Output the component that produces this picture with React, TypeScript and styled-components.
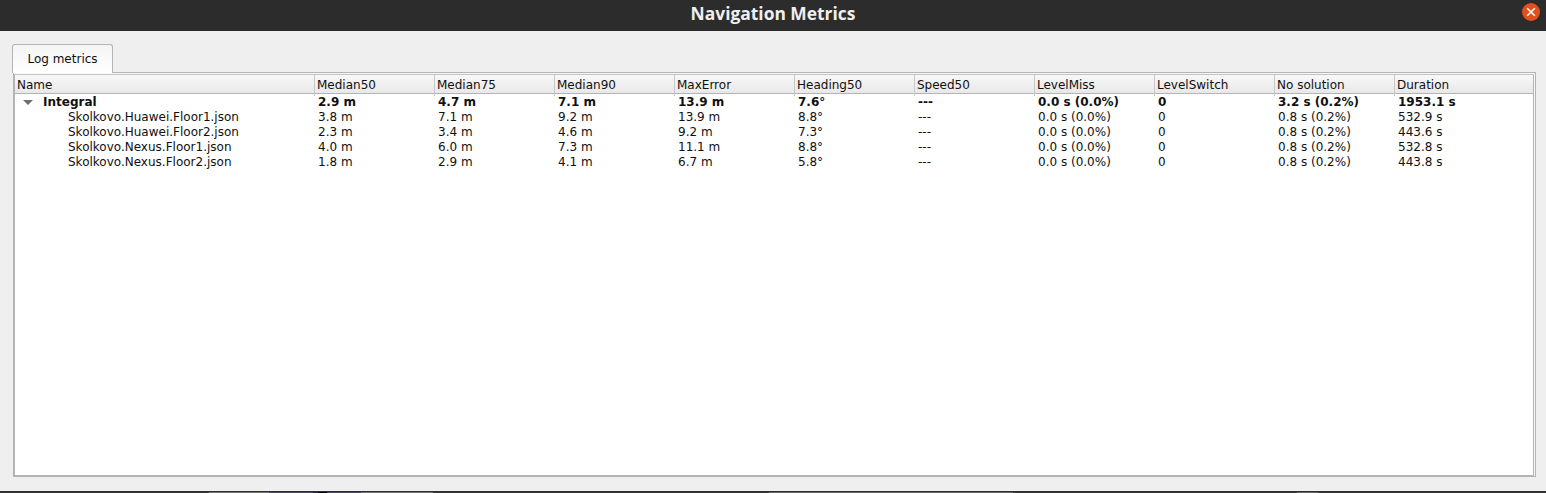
import React from 'react';
import styled, { createGlobalStyle } from 'styled-components';

const columns = [
  'Median50',
  'Median75',
  'Median90',
  'MaxError',
  'Heading50',
  'Speed50',
  'LevelMiss',
  'LevelSwitch',
  'No solution',
  'Duration',
];

const integral = ['2.9 m', '4.7 m', '7.1 m', '13.9 m', '7.6°', '---', '0.0 s (0.0%)', '0', '3.2 s (0.2%)', '1953.1 s'];

const logs = [
  { name: 'Skolkovo.Huawei.Floor1.json', values: ['3.8 m', '7.1 m', '9.2 m', '13.9 m', '8.8°', '---', '0.0 s (0.0%)', '0', '0.8 s (0.2%)', '532.9 s'] },
  { name: 'Skolkovo.Huawei.Floor2.json', values: ['2.3 m', '3.4 m', '4.6 m', '9.2 m', '7.3°', '---', '0.0 s (0.0%)', '0', '0.8 s (0.2%)', '443.6 s'] },
  { name: 'Skolkovo.Nexus.Floor1.json', values: ['4.0 m', '6.0 m', '7.3 m', '11.1 m', '8.8°', '---', '0.0 s (0.0%)', '0', '0.8 s (0.2%)', '532.8 s'] },
  { name: 'Skolkovo.Nexus.Floor2.json', values: ['1.8 m', '2.9 m', '4.1 m', '6.7 m', '5.8°', '---', '0.0 s (0.0%)', '0', '0.8 s (0.2%)', '443.8 s'] },
];

// what shows of the desktop under the window, along the last pixel row
const desktopStrip = [
  { width: 209, color: '#3a3a3a' },
  { width: 60, color: '#777777' },
  { width: 44, color: '#4a4468' },
  { width: 5, color: '#2a2070' },
  { width: 9, color: '#000000' },
  { width: 34, color: '#4a4468' },
  { width: 72, color: '#777777' },
  { width: 336, color: '#3a3a3a' },
  { width: 244, color: '#666666' },
  { width: 284, color: '#3a3a3a' },
  { width: 21, color: '#666666' },
  { width: 228, color: '#3a3a3a' },
];

const App: React.FC = () => {
  return (
    <Window>
      <GlobalStyle />
      <TitleBar>
        <Title>Navigation Metrics</Title>
        <CloseButton aria-label="Close">
          <svg width="10" height="10" viewBox="0 0 10 10">
            <path d="M1.2 1.2 L8.8 8.8 M8.8 1.2 L1.2 8.8" stroke="#fff" strokeWidth="1.6" fill="none" />
          </svg>
        </CloseButton>
      </TitleBar>

      <Content>
        <TabBar>
          <Tab>Log metrics</Tab>
        </TabBar>
        <Pane>
          <Tree>
            <HeaderRow>
              <HeaderCell>Name</HeaderCell>
              {columns.map((c) => (
                <HeaderCell key={c}>{c}</HeaderCell>
              ))}
            </HeaderRow>

            <RowList>
              <Row $bold>
                <NameCell $indent={8}>
                  <Arrow />
                  Integral
                </NameCell>
                {integral.map((v, i) => (
                  <Cell key={i}>{v}</Cell>
                ))}
              </Row>

              {logs.map((log) => (
                <Row key={log.name}>
                  <NameCell $indent={53}>{log.name}</NameCell>
                  {log.values.map((v, i) => (
                    <Cell key={i}>{v}</Cell>
                  ))}
                </Row>
              ))}
            </RowList>
          </Tree>
        </Pane>
      </Content>

      <BottomEdge>
        {desktopStrip.map((s, i) => (
          <StripPart key={i} $width={s.width} $color={s.color} />
        ))}
      </BottomEdge>
    </Window>
  );
};

export default App;

const GlobalStyle = createGlobalStyle`
  html, body {
    margin: 0;
    padding: 0;
    height: 100%;
    overflow: hidden;
    background: #efefef;
  }
`;

const Window = styled.div`
  width: 1546px;
  height: 493px;
  display: flex;
  flex-direction: column;
  background: #efefef;
  font-family: 'DejaVu Sans', sans-serif;
  font-size: 12px;
  color: #101010;
`;

const TitleBar = styled.div`
  position: relative;
  flex: 0 0 31px;
  display: flex;
  align-items: center;
  justify-content: center;
  background: #2c2c2c;
`;

const Title = styled.div`
  font-family: 'Open Sans', 'Noto Sans', sans-serif;
  font-size: 17.4px;
  font-weight: 700;
  color: #efefef;
  margin-bottom: 5px;
`;

const CloseButton = styled.div`
  position: absolute;
  top: 3px;
  right: 6px;
  width: 18px;
  height: 18px;
  border-radius: 50%;
  background: #e2501c;
  display: flex;
  align-items: center;
  justify-content: center;
`;

const Content = styled.div`
  flex: 1;
  display: flex;
  flex-direction: column;
  padding: 13px 10px 14px 13px;
  min-height: 0;
`;

const TabBar = styled.div`
  display: flex;
  height: 28px;
  margin-left: -1px;
`;

const Tab = styled.div`
  box-sizing: border-box;
  width: 101px;
  height: 29px;
  padding-top: 7px;
  text-align: center;
  background: linear-gradient(#f5f5f5, #ffffff);
  border: 1px solid #b4b4b4;
  border-bottom: none;
  border-radius: 3px 3px 0 0;
  position: relative;
  z-index: 1;
`;

const Pane = styled.div`
  flex: 1;
  box-sizing: border-box;
  border: 1px solid #b4b4b4;
  padding: 1px 1px 0 0;
  background: #f7f7f7;
  min-height: 0;
`;

const Tree = styled.div`
  box-sizing: border-box;
  height: 100%;
  background: #fff;
  border: 1px solid #b4b4b4;
  border-top-color: #c4c4c4;
`;

const HeaderRow = styled.div`
  display: grid;
  grid-template-columns: 300px repeat(9, 120px) 1fr;
  height: 18px;
  background: linear-gradient(#f8f8f8, #e8e8e8);
  border-bottom: 1px solid #b4b4b4;
`;

const HeaderCell = styled.div`
  box-sizing: border-box;
  padding-left: 2px;
  line-height: 21px;
  border-right: 1px solid #c8c8c8;
  white-space: nowrap;

  &:last-child {
    border-right: none;
  }
`;

const RowList = styled.div`
  padding-top: 1px;
`;

const Row = styled.div<{ $bold?: boolean }>`
  display: grid;
  grid-template-columns: 300px repeat(9, 120px) 1fr;
  height: 15px;
  line-height: 15px;
  font-weight: ${({ $bold }) => ($bold ? 700 : 400)};
`;

const Cell = styled.div`
  padding-left: 3px;
  white-space: nowrap;
`;

const NameCell = styled.div<{ $indent: number }>`
  display: flex;
  align-items: center;
  padding-left: ${({ $indent }) => $indent}px;
  white-space: nowrap;
`;

const Arrow = styled.span`
  width: 0;
  height: 0;
  margin-right: 10px;
  border-left: 5px solid transparent;
  border-right: 5px solid transparent;
  border-top: 5px solid #6e6e6e;
`;

const BottomEdge = styled.div`
  flex: 0 0 2px;
  display: flex;
  align-items: flex-end;
  background: #2e2e2e;
`;

const StripPart = styled.div<{ $width: number; $color: string }>`
  flex: 0 0 ${({ $width }) => $width}px;
  height: 1px;
  background: ${({ $color }) => $color};
`;
